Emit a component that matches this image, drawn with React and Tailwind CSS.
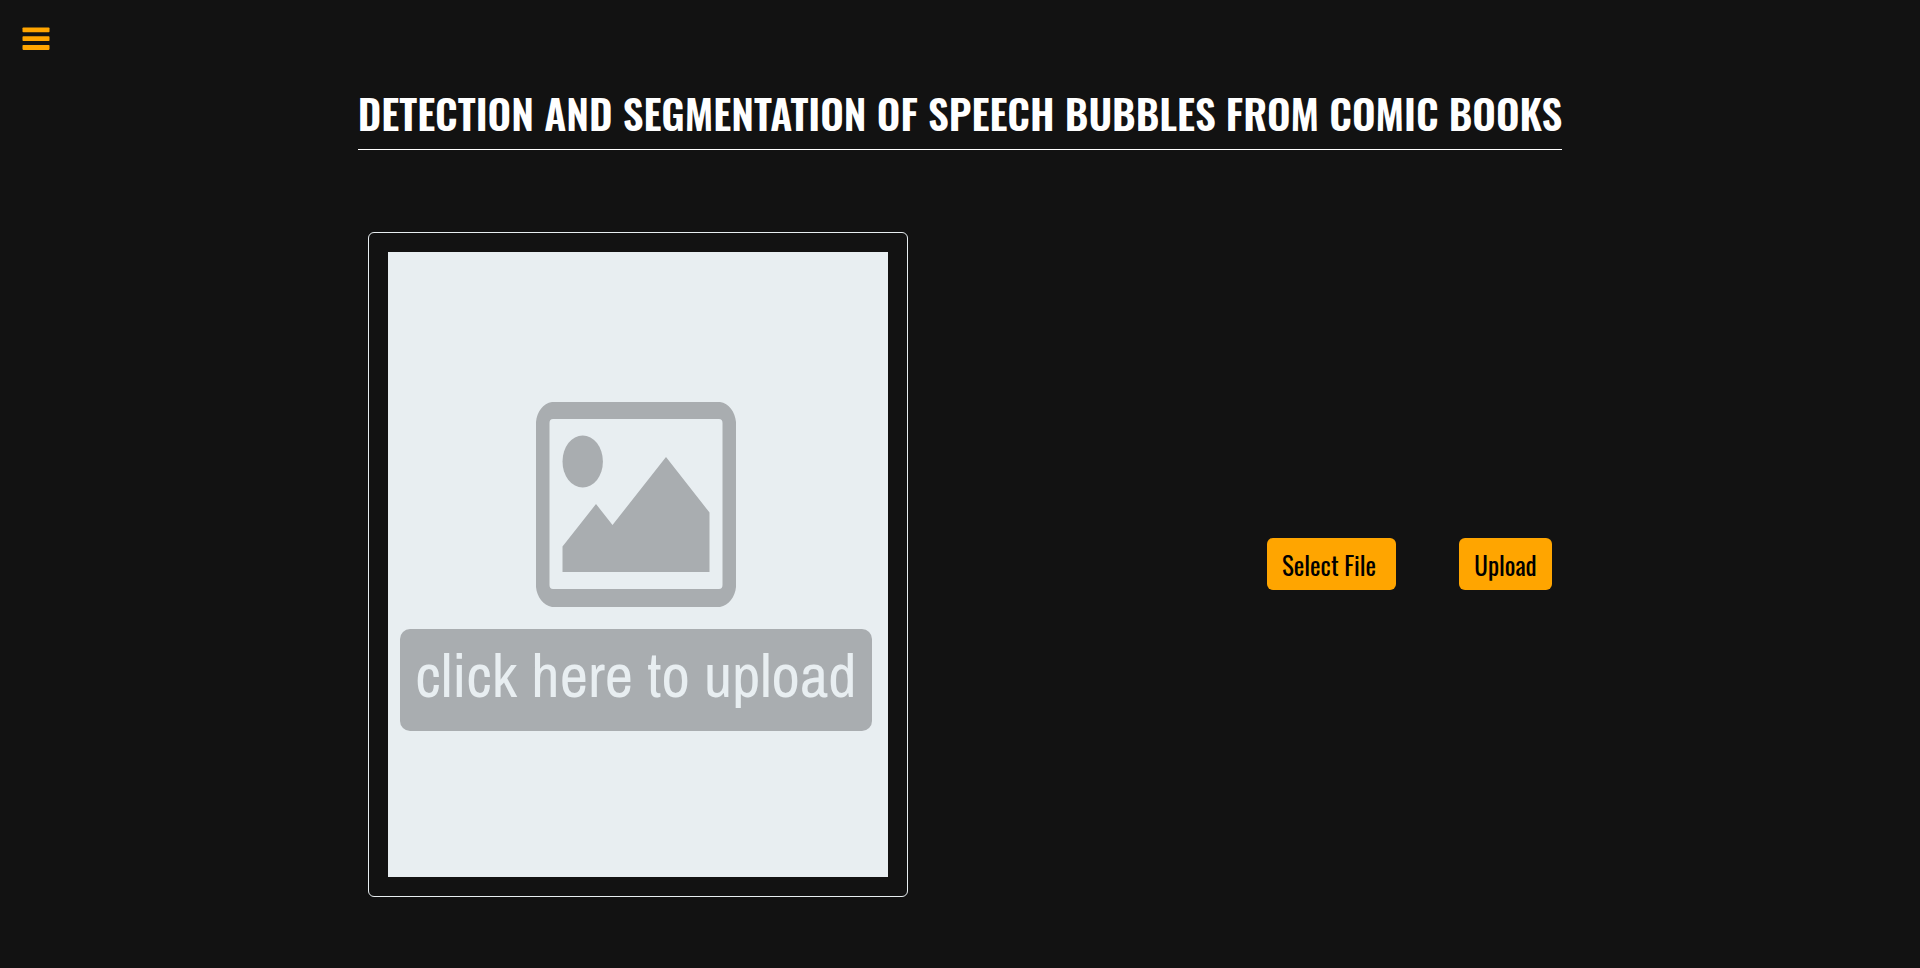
import React from 'react';

function PlaceholderIcon() {
  return (
    <svg className="h-[205px] w-[200px]" viewBox="0 0 200 205" aria-hidden="true">
      <path
        fill="#a9adb0"
        fillRule="evenodd"
        d="M16 0H184C193 1 199 10 200 20V185C199 195 193 203 184 205H16C7 203 1 195 0 185V20C1 10 7 1 16 0ZM17 17Q13.500 17 13.500 21V183Q13.500 187 17 187H183Q186.500 187 186.500 183V21Q186.500 17 183 17Z"
      />
      <ellipse cx="46.700" cy="59.500" rx="20.200" ry="26" fill="#a9adb0" />
      <path fill="#a9adb0" d="M26.500 144.500 60 102 76.500 123 130 55 173.500 110.500V170H26.500Z" />
    </svg>
  );
}

export default function App() {
  return (
    <div className="flex min-h-screen flex-col bg-[#121212] font-['Oswald','Liberation_Sans',sans-serif] text-white">
      <nav className="px-[22px] pt-[27px]">
        <button type="button" aria-label="Open menu" className="flex flex-col">
          <svg className="h-6 w-7" viewBox="0 0 28 24" fill="#ffa500" aria-hidden="true">
            <rect x="0.500" y="0.500" width="27" height="4.800" rx="0.800" />
            <rect x="0.500" y="9.300" width="27" height="4.700" rx="0.800" />
            <rect x="0.500" y="18" width="27" height="4.900" rx="0.800" />
          </svg>
        </button>
      </nav>

      <header className="mt-9 flex justify-center">
        <h1 className="border-b border-white pb-[10px] text-[41px] leading-[52px] font-semibold whitespace-nowrap">
          DETECTION AND SEGMENTATION OF SPEECH BUBBLES FROM COMIC BOOKS
        </h1>
      </header>

      <main className="mx-auto mt-[82px] flex w-full max-w-[1184px] items-center justify-between pb-[70px]">
        <label
          htmlFor="comic-file"
          className="w-[540px] cursor-pointer rounded-md border border-[#e8eef1] p-[19px]"
        >
          <span className="flex h-[625px] flex-col items-center bg-[#e8eef1] pt-[150px] pr-1">
            <PlaceholderIcon />
            <span className="mt-[22px] flex h-[102px] w-[472px] items-center justify-center rounded-[10px] bg-[#a9adb0] pb-[10px] font-['Archivo_Narrow','Liberation_Sans',sans-serif] text-[62px] leading-[72px] whitespace-nowrap text-[#e8eef1]">
              click here to upload
            </span>
          </span>
        </label>

        <form className="flex gap-[63px] pb-0.5 text-[25px] text-black" onSubmit={(event) => event.preventDefault()}>
          <input id="comic-file" type="file" accept="image/*" className="sr-only" aria-label="Comic page" />
          <label
            htmlFor="comic-file"
            className="flex h-[52px] w-[129px] cursor-pointer items-center rounded-md bg-[#ffa500] pt-0.5 pl-[15px]"
          >
            Select File
          </label>
          <button type="submit" className="h-[52px] w-[93px] rounded-md bg-[#ffa500] pt-0.5">
            Upload
          </button>
        </form>
      </main>
    </div>
  );
}
